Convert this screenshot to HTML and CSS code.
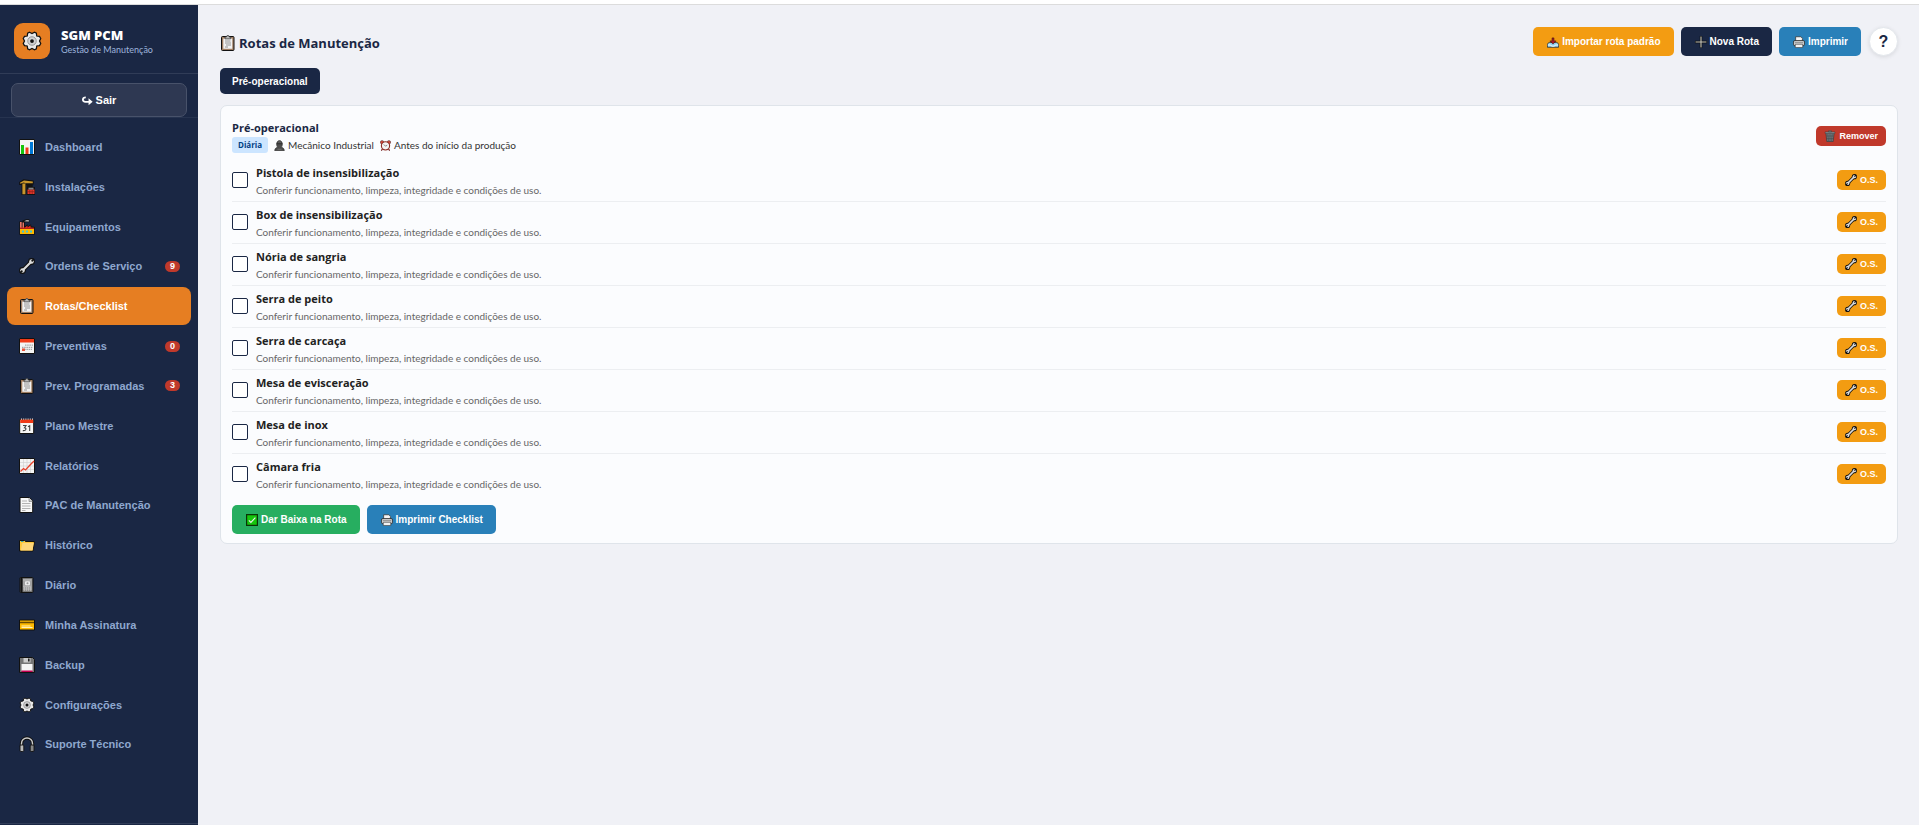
FILE: index.html
```
<!DOCTYPE html>
<html lang="pt-BR">
<head>
<meta charset="utf-8">
<meta name="viewport" content="width=device-width, initial-scale=1">
<title>SGM PCM - Rotas de Manutenção</title>
<link rel="stylesheet" href="styles.css">
</head>
<body>

<!-- icones -->
<svg class="sprite" aria-hidden="true">
<symbol id="i-gear" viewBox="0 0 16 16">
<path d="M6 1l2 1 2-1 1.500.8.3 2.200 2.200.3L15 6l-1 2 1 2-1 1.700-2.200.3-.3 2.200L10 15l-2-1-2 1-1.500-.8-.3-2.200L2 11.700 1 10l1-2-1-2 1-1.700L4.200 4l.3-2.200z" fill="#e8e8e8" stroke="#111" stroke-width="1"/>
<circle cx="8" cy="8" r="3.400" fill="#d2d2d2" stroke="#8a8a8a" stroke-width=".7"/>
<circle cx="8" cy="8" r="1.500" fill="#111"/>
</symbol>
<symbol id="i-chart" viewBox="0 0 16 16">
<path d="M.5.5h15v15H.5z" fill="#f4f4f4" stroke="#111"/>
<path d="M2 6h3v9H2z" fill="#16c60c"/><path d="M6.500 8.500h3V15h-3z" fill="#f03a17"/><path d="M11 3h3v12h-3z" fill="#0078d7"/>
</symbol>
<symbol id="i-crane" viewBox="0 0 16 16">
<path d="M2.500 16V6H.2V3L4.500.3 14.700 1.500v4h-1V8H16v8H7.500V6H7v10z" fill="#111"/>
<path d="M3.400 15.300V4.500h3v10.800zM1.200 4.800V3.500L5 1.400l8.800 1.200v1.600H6l-1-.8z" fill="#c8962c"/>
<path d="M8.500 10.500h7V15h-7z" fill="#e8382c"/><path d="M8.500 12.700h7M10.800 11v4M13.200 11v4" stroke="#862018" stroke-width=".7"/>
<path d="M9.500 8.700h5v1.800h-5z" fill="#888"/>
</symbol>
<symbol id="i-factory" viewBox="0 0 16 16">
<path d="M.3 15.800V2.500h3V1.500l4-1.200h3v3H6v4l3-2v2l3-2 .3 2L15.700 8v7.800z" fill="#111"/>
<path d="M1 9V3h1.700v6zM3.500 9V3.500H5V9z" fill="#e77465"/>
<path d="M5 2.300l2.500-1.100h2.300v1.200z" fill="#ddd"/>
<path d="M1 9.800V8.500h5l2.500-2v2l3-2v2l3.500.3v1z" fill="#e8281c"/>
<path d="M1 10h14v5H1z" fill="#ffb900"/>
<path d="M3 11.500h2v2H3zM7 11.500h2v2H7zM11 11.500h2v2h-2z" fill="#42c4d8"/>
</symbol>
<symbol id="i-wrench" viewBox="0 0 16 16">
<path d="M3.500 12.500l9-9" stroke="#111" stroke-width="4.200"/>
<circle cx="3.500" cy="12.500" r="3.400" fill="#111"/><circle cx="12.500" cy="3.500" r="3.400" fill="#111"/>
<path d="M3.500 12.500l9-9" stroke="#dcdcdc" stroke-width="2.200"/>
<circle cx="3.500" cy="12.500" r="2.300" fill="#dcdcdc"/><circle cx="12.500" cy="3.500" r="2.300" fill="#dcdcdc"/>
<path d="M3.400 12.600L1 15M12.600 3.400L15 1" stroke="#111" stroke-width="1.600"/>
</symbol>
<symbol id="i-clip" viewBox="0 0 16 16">
<rect x="1.500" y="1.500" width="12.500" height="14" rx="1" fill="#a07d60" stroke="#111"/>
<path d="M3.300 3.500h9v10.300h-9z" fill="#f2f2f2"/>
<path d="M5 3.200V2h1.500L7 .6h1.700L9.200 2h1.500v1.900H5z" fill="#bbb" stroke="#333" stroke-width=".7"/>
<path d="M5 6h5.500M5 8h6M6 10h5M5 12h3" stroke="#8a8a8a" stroke-width=".9"/>
</symbol>
<symbol id="i-cal" viewBox="0 0 16 16">
<path d="M.5.5h15v15H.5z" fill="#f4f4f4" stroke="#111"/>
<path d="M1 1h14v3.500H1z" fill="#f03a17"/>
<path d="M6 7.200h8M3 9.300h11M3 11.400h10" stroke="#a6a6a6" stroke-width="1.300" stroke-dasharray="1.500 .7"/>
<path d="M3 10.500h3V13H3z" fill="#e8553c"/>
</symbol>
<symbol id="i-cal31" viewBox="0 0 16 16">
<path d="M.7 1.500h14v14H.7z" fill="#f6f6f6" stroke="#111"/>
<path d="M1.200 1.500h13V5h-13z" fill="#f03a17"/>
<path d="M2 1.200h12" stroke="#ddd" stroke-width="1.200" stroke-dasharray="1 1.200"/>
<path d="M4 7.500h3L5.500 9.700c2.400.2 1.800 3.400-1.700 2.900M9 8.700l1.700-1V13" fill="none" stroke="#444" stroke-width="1.100"/>
</symbol>
<symbol id="i-line" viewBox="0 0 16 16">
<path d="M.5.5h15v15H.5z" fill="#f4f4f4" stroke="#111"/>
<path d="M4.500 1v14M8 1v14M11.500 1v14M1 4.500h14M1 8h14M1 11.500h14" stroke="#ccc" stroke-width=".6"/>
<path d="M1.500 13.500l3-3 2 1.500 5-5.500 3.500-3.500" fill="none" stroke="#e8402a" stroke-width="1.300"/>
</symbol>
<symbol id="i-page" viewBox="0 0 16 16">
<path d="M1 .5h9.500L13.700 4v11.500H1z" fill="#f7f7f7" stroke="#111"/>
<path d="M10 1v3.500h3.500" fill="#ccc" stroke="#777" stroke-width=".6"/>
<path d="M3 4h5M3 6.500h8.500M3 9h8.500M3 11.500h8.500M3 13.500h3.500" stroke="#aaa" stroke-width=".9"/>
</symbol>
<symbol id="i-folder" viewBox="0 0 16 16">
<path d="M.5 14V3.500h5L6.500 4.500h9L14 14z" fill="#ffc83d" stroke="#111"/>
<path d="M1.800 13.500l1.700-7.500h11.300l-1.300 7.500z" fill="#ffd679"/>
<path d="M2 4.500h2.500" stroke="#37a8b0" stroke-width="1"/>
</symbol>
<symbol id="i-book" viewBox="0 0 16 16">
<rect x="1" y=".5" width="13" height="15" rx=".8" fill="#777" stroke="#111"/>
<path d="M1.500 1h2v14h-2z" fill="#111"/>
<path d="M4 2h9v11.500H4z" fill="#a2a2a2"/>
<path d="M4.500 3h8M5 11h8M4.500 9.300h8M5 13h7" stroke="#ddd" stroke-width=".8" stroke-dasharray="1 1"/>
<rect x="6" y="4.300" width="5" height="4" rx="1" fill="#ececec"/><circle cx="8.500" cy="6.200" r="1" fill="#999"/>
</symbol>
<symbol id="i-card" viewBox="0 0 16 16">
<path d="M.5 3h15v10H.5z" fill="#ffb900" stroke="#111"/>
<path d="M1 5.500h14" stroke="#6b4a00" stroke-width="1.500"/>
<path d="M2.500 9h9M2.500 10.500h11" stroke="#fff0bc" stroke-width="1"/>
</symbol>
<symbol id="i-disk" viewBox="0 0 16 16">
<path d="M.5.5h13l2 2v13H.5z" fill="#767676" stroke="#111"/>
<path d="M4.500 1h7v4.500h-7z" fill="#ccc"/><path d="M9 1.500h1.600v3H9z" fill="#222"/>
<path d="M2.500 7h11v7h-11z" fill="#f5f5f5"/><path d="M2.500 13.500h11V15h-11z" fill="#c30052"/>
</symbol>
<symbol id="i-phones" viewBox="0 0 16 16">
<path d="M2.500 11V7.500a5.500 5.500 0 0 1 11 0V11" fill="none" stroke="#111" stroke-width="3.400"/>
<path d="M2.500 11V7.500a5.500 5.500 0 0 1 11 0V11" fill="none" stroke="#ccc" stroke-width="1.400"/>
<rect x="1" y="9" width="3.800" height="6.500" rx="1" fill="#bbb" stroke="#111" stroke-width=".9"/>
<rect x="11.200" y="9" width="3.800" height="6.500" rx="1" fill="#888" stroke="#111" stroke-width=".9"/>
</symbol>
<symbol id="i-exit" viewBox="0 0 16 16">
<path d="M5.500 3.500C0 3.500 0 10 5 10h6" fill="none" stroke="#fff" stroke-width="2.600"/>
<path d="M9.500 4.800l6 5-6 5z" fill="#fff"/>
</symbol>
<symbol id="i-inbox" viewBox="0 0 16 16">
<path d="M.5 15v-4.500L3 8.500h10l2.500 2V15z" fill="#8fd0f0" stroke="#222"/>
<path d="M1 12h4l1 1.500h4l1-1.500h4" fill="none" stroke="#fff" stroke-width="1.200"/>
<path d="M6.700 2.500h2.600v4H12L8 10.800 4 6.500h2.700z" fill="#a51d2a" stroke="#3a1010" stroke-width=".7"/>
</symbol>
<symbol id="i-plus" viewBox="0 0 16 16">
<path d="M8 0v16M0 8h16" stroke="#080808" stroke-width="3.200"/><path d="M8 .7v14.600M.7 8h14.600" stroke="#c8c8c0" stroke-width="1.500"/>
</symbol>
<symbol id="i-print" viewBox="0 0 16 16">
<path d="M3.500 6.500V1h7l2 2v3.500" fill="#f6f6f6" stroke="#333"/>
<rect x=".6" y="6" width="14.800" height="7" rx="2" fill="#ccc" stroke="#222"/>
<path d="M2.500 8.500h11" stroke="#777" stroke-width=".9"/>
<path d="M3 11h10v4.400H3z" fill="#f2f2f2" stroke="#333" stroke-width=".8"/>
</symbol>
<symbol id="i-trash" viewBox="0 0 16 16">
<path d="M2.500 4h11l-1.300 11.500H3.800z" fill="#71797d" stroke="#333" stroke-width=".8"/>
<path d="M5 5l1 10M8 5v10M11 5l-1 10M3.500 8h9M3.800 11.500h8.400" stroke="#434a4d" stroke-width=".8"/>
<path d="M1.500 2.500h13v2h-13zM6 1h4v1.500H6z" fill="#8d9598" stroke="#333" stroke-width=".6"/>
</symbol>
<symbol id="i-check" viewBox="0 0 16 16">
<path d="M.8.8h14.400v14.400H.8z" fill="#16c60c" stroke="#0a3307" stroke-width="1.600"/>
<path d="M3.800 8.500l2.700 2.700 6-6.500" fill="none" stroke="#eee" stroke-width="1.500"/>
</symbol>
<symbol id="i-worker" viewBox="0 0 16 16">
<path d="M1 15.500c0-3 2-4.500 4.500-4.800C3 8.500 3 1 8 .8 13 1 13 8.500 10.500 10.700 13 11 15 12.500 15 15.500z" fill="#4d4d4d" stroke="#222" stroke-width=".8"/>
<path d="M3.500 5.500h9" stroke="#222"/><path d="M6 3.500c1-1 3-1 4 0" fill="none" stroke="#777"/><path d="M5 13.500h6" stroke="#888" stroke-width=".8"/>
</symbol>
<symbol id="i-clock" viewBox="0 0 16 16">
<path d="M3.500 13l-1.500 2.500M12.500 13l1.500 2.500" stroke="#6b1212" stroke-width="1.600"/>
<circle cx="3" cy="3.300" r="2.500" fill="#d9493c" stroke="#333" stroke-width=".7"/><circle cx="13" cy="3.300" r="2.500" fill="#d9493c" stroke="#333" stroke-width=".7"/>
<circle cx="8" cy="8.500" r="6" fill="#f4f4f4" stroke="#8c2c22" stroke-width="1.600"/>
<path d="M5.500 6.500L8 9l2.500-1.500" fill="none" stroke="#555"/>
</symbol>
</svg>

<div class="topbar"></div>
<div class="app">

<aside class="sidebar">
	<div class="brand">
		<div class="logo"><svg class="ico-lg"><use href="#i-gear"/></svg></div>
		<div>
			<div class="brand-name">SGM PCM</div>
			<div class="brand-sub">Gestão de Manutenção</div>
		</div>
	</div>
	<div class="logout">
		<button type="button" class="btn-sair"><svg class="ico-xs"><use href="#i-exit"/></svg> Sair</button>
	</div>
	<nav class="menu">
		<a href="#"><svg class="ico"><use href="#i-chart"/></svg>Dashboard</a>
		<a href="#"><svg class="ico"><use href="#i-crane"/></svg>Instalações</a>
		<a href="#"><svg class="ico"><use href="#i-factory"/></svg>Equipamentos</a>
		<a href="#"><svg class="ico"><use href="#i-wrench"/></svg>Ordens de Serviço<span class="count">9</span></a>
		<a href="#" class="active"><svg class="ico"><use href="#i-clip"/></svg>Rotas/Checklist</a>
		<a href="#"><svg class="ico"><use href="#i-cal"/></svg>Preventivas<span class="count">0</span></a>
		<a href="#"><svg class="ico"><use href="#i-clip"/></svg>Prev. Programadas<span class="count">3</span></a>
		<a href="#"><svg class="ico"><use href="#i-cal31"/></svg>Plano Mestre</a>
		<a href="#"><svg class="ico"><use href="#i-line"/></svg>Relatórios</a>
		<a href="#"><svg class="ico"><use href="#i-page"/></svg>PAC de Manutenção</a>
		<a href="#"><svg class="ico"><use href="#i-folder"/></svg>Histórico</a>
		<a href="#"><svg class="ico"><use href="#i-book"/></svg>Diário</a>
		<a href="#"><svg class="ico"><use href="#i-card"/></svg>Minha Assinatura</a>
		<a href="#"><svg class="ico"><use href="#i-disk"/></svg>Backup</a>
		<a href="#"><svg class="ico"><use href="#i-gear"/></svg>Configurações</a>
		<a href="#"><svg class="ico"><use href="#i-phones"/></svg>Suporte Técnico</a>
	</nav>
	<div class="side-foot"></div>
</aside>

<main class="content">
	<header class="page-head">
		<h1><svg class="ico"><use href="#i-clip"/></svg>Rotas de Manutenção</h1>
		<div class="actions">
			<button type="button" class="btn amarelo"><svg class="ico-sm"><use href="#i-inbox"/></svg>Importar rota padrão</button>
			<button type="button" class="btn escuro"><svg class="ico-sm"><use href="#i-plus"/></svg>Nova Rota</button>
			<button type="button" class="btn azul"><svg class="ico-sm"><use href="#i-print"/></svg>Imprimir</button>
			<button type="button" class="help" title="Ajuda">?</button>
		</div>
	</header>

	<div class="tabs">
		<button type="button" class="tab">Pré-operacional</button>
	</div>

	<section class="card">
		<div class="card-head">
			<div>
				<h2>Pré-operacional</h2>
				<div class="meta">
					<span class="freq">Diária</span>
					<span class="info"><svg class="ico-xs"><use href="#i-worker"/></svg>Mecânico Industrial</span>
					<span class="info"><svg class="ico-xs"><use href="#i-clock"/></svg>Antes do início da produção</span>
				</div>
			</div>
			<button type="button" class="btn-sm vermelho"><svg class="ico-sm"><use href="#i-trash"/></svg>Remover</button>
		</div>

		<ul class="itens">
			<li>
				<input type="checkbox" id="item1">
				<label for="item1"><b>Pistola de insensibilização</b><small>Conferir funcionamento, limpeza, integridade e condições de uso.</small></label>
				<button type="button" class="btn-sm amarelo"><svg class="ico-sm"><use href="#i-wrench"/></svg>O.S.</button>
			</li>
			<li>
				<input type="checkbox" id="item2">
				<label for="item2"><b>Box de insensibilização</b><small>Conferir funcionamento, limpeza, integridade e condições de uso.</small></label>
				<button type="button" class="btn-sm amarelo"><svg class="ico-sm"><use href="#i-wrench"/></svg>O.S.</button>
			</li>
			<li>
				<input type="checkbox" id="item3">
				<label for="item3"><b>Nória de sangria</b><small>Conferir funcionamento, limpeza, integridade e condições de uso.</small></label>
				<button type="button" class="btn-sm amarelo"><svg class="ico-sm"><use href="#i-wrench"/></svg>O.S.</button>
			</li>
			<li>
				<input type="checkbox" id="item4">
				<label for="item4"><b>Serra de peito</b><small>Conferir funcionamento, limpeza, integridade e condições de uso.</small></label>
				<button type="button" class="btn-sm amarelo"><svg class="ico-sm"><use href="#i-wrench"/></svg>O.S.</button>
			</li>
			<li>
				<input type="checkbox" id="item5">
				<label for="item5"><b>Serra de carcaça</b><small>Conferir funcionamento, limpeza, integridade e condições de uso.</small></label>
				<button type="button" class="btn-sm amarelo"><svg class="ico-sm"><use href="#i-wrench"/></svg>O.S.</button>
			</li>
			<li>
				<input type="checkbox" id="item6">
				<label for="item6"><b>Mesa de evisceração</b><small>Conferir funcionamento, limpeza, integridade e condições de uso.</small></label>
				<button type="button" class="btn-sm amarelo"><svg class="ico-sm"><use href="#i-wrench"/></svg>O.S.</button>
			</li>
			<li>
				<input type="checkbox" id="item7">
				<label for="item7"><b>Mesa de inox</b><small>Conferir funcionamento, limpeza, integridade e condições de uso.</small></label>
				<button type="button" class="btn-sm amarelo"><svg class="ico-sm"><use href="#i-wrench"/></svg>O.S.</button>
			</li>
			<li>
				<input type="checkbox" id="item8">
				<label for="item8"><b>Câmara fria</b><small>Conferir funcionamento, limpeza, integridade e condições de uso.</small></label>
				<button type="button" class="btn-sm amarelo"><svg class="ico-sm"><use href="#i-wrench"/></svg>O.S.</button>
			</li>
		</ul>

		<div class="card-foot">
			<button type="button" class="btn verde"><svg class="ico-sm"><use href="#i-check"/></svg>Dar Baixa na Rota</button>
			<button type="button" class="btn azul"><svg class="ico-sm"><use href="#i-print"/></svg>Imprimir Checklist</button>
		</div>
	</section>
</main>

</div>
</body>
</html>
```
FILE: styles.css
```
*{
	box-sizing:border-box;
	margin:0;
	padding:0;
}
body{
	font-family:"Segoe UI","Open Sans","Noto Sans",sans-serif;
	font-size:10px;
	color:#222;
	background:#f0f1f6;
}
button{
	font-family:Arial,"Liberation Sans",sans-serif;
	font-weight:bold;
	border:0;
	cursor:pointer;
}
.sprite{
	position:absolute;
	width:0;
	height:0;
}
.ico{ width:16px; height:16px; flex:none; }
.ico-lg{ width:20px; height:20px; }
.ico-sm{ width:12px; height:12px; flex:none; }
.ico-xs{ width:11px; height:11px; flex:none; }

.topbar{
	height:5px;
	background:#fff;
	border-bottom:1px solid #dcdcdc;
}
.app{
	display:flex;
	min-height:calc(100vh - 5px);
}

/* menu lateral */
.sidebar{
	width:198px;
	flex:none;
	display:flex;
	flex-direction:column;
	background:#1a2744;
}
.brand{
	display:flex;
	align-items:center;
	gap:11px;
	padding:18px 14px 14px;
	border-bottom:1px solid #303c57;
}
.logo{
	width:36px;
	height:36px;
	border-radius:9px;
	background:#e67e22;
	display:flex;
	align-items:center;
	justify-content:center;
}
.brand-name{
	font-size:13px;
	line-height:16px;
	font-weight:800;
	color:#fff;
}
.brand-sub{
	font-family:"Segoe UI",Lato,sans-serif;
	font-size:9px;
	line-height:13px;
	color:#9db4dc;
}
.logout{
	padding:9px 11px 0;
	border-bottom:1px solid #26334f;
}
.btn-sair{
	display:flex;
	align-items:center;
	justify-content:center;
	gap:3px;
	width:100%;
	height:34px;
	font-size:11px;
	color:#fff;
	background:#2e3852;
	border:1px solid #48526a;
	border-radius:7px;
}
.menu{
	flex:1;
	padding:10px 7px;
}
.menu a{
	display:flex;
	align-items:center;
	gap:10px;
	height:38px;
	margin-bottom:1%;
	padding:0 11px 0 12px;
	border-radius:8px;
	font-family:Arial,"Liberation Sans",sans-serif;
	font-size:11px;
	font-weight:bold;
	color:#8fa8cf;
	text-decoration:none;
}
.menu a.active{
	background:#e67e22;
	color:#fff;
}
.count{
	margin-left:auto;
	width:15px;
	height:11px;
	border-radius:6px;
	background:#c0392b;
	color:#fff;
	font-size:9px;
	line-height:11px;
	text-align:center;
}
.side-foot{
	height:2px;
	border-top:1px solid #303c57;
}

/* conteudo */
.content{
	flex:1;
	min-width:0;
	padding:22px 21px 22px 22px;
}
.page-head{
	display:flex;
	align-items:center;
	justify-content:space-between;
	margin-bottom:12px;
}
h1{
	display:flex;
	align-items:center;
	gap:3px;
	padding-top:2px;
	font-size:13px;
	line-height:20px;
	color:#1a2744;
}
.actions{
	display:flex;
	gap:7px;
}
.btn{
	display:flex;
	align-items:center;
	gap:3px;
	height:29px;
	padding:0 13px 0 14px;
	border-radius:5px;
	font-size:10px;
	color:#fff;
}
.btn-sm{
	display:flex;
	align-items:center;
	gap:3px;
	height:20px;
	padding:0 8px;
	border-radius:5px;
	font-size:9px;
	color:#fff;
}
.amarelo{ background:#f39c12; }
.escuro{ background:#1a2744; }
.azul{ background:#2980b9; }
.verde{ background:#27ae60; }
.vermelho{ background:#c0392b; }
.help{
	width:29px;
	height:29px;
	margin-left:1px;
	border-radius:50%;
	border:1px solid #e3e7ec;
	background:#fff;
	color:#1a2744;
	font-size:16px;
	font-weight:900;
	box-shadow:0 1px 4px rgba(0,0,0,.1);
}
.tabs{
	display:flex;
	margin-bottom:11px;
}
.tab{
	height:26px;
	padding:0 12px;
	border-radius:5px;
	font-size:10px;
	color:#fff;
	background:#1a2744;
}

.card{
	padding:12px 11px 9px;
	background:#fbfcfe;
	border:1px solid #dfe4ea;
	border-radius:7px;
}
.card-head{
	display:flex;
	align-items:center;
	justify-content:space-between;
	margin-bottom:7px;
}
h2{
	font-size:11px;
	line-height:19px;
	color:#1a2744;
}
.meta{
	display:flex;
	align-items:center;
	gap:6px;
	line-height:16px;
}
.freq{
	padding:0 6px;
	border-radius:3px;
	background:#cce5ff;
	color:#004085;
	font-size:8px;
	font-weight:bold;
}
.info{
	display:flex;
	align-items:center;
	gap:3px;
	font-family:"Segoe UI",Lato,sans-serif;
	color:#333;
}
.itens{
	list-style:none;
}
.itens li{
	display:flex;
	align-items:center;
	gap:8px;
	height:42px;
	padding-bottom:2px;
	border-bottom:1px solid #eceef1;
}
.itens li:last-child{
	border-bottom-color:transparent;
}
.itens input{
	appearance:none;
	width:16px;
	height:16px;
	background:#fff;
	border:1px solid #1a2744;
	border-radius:2px;
}
.itens input:checked{
	background:#1a2744;
}
.itens label{
	flex:1;
}
.itens b{
	display:block;
	font-size:11px;
	line-height:20px;
}
.itens small{
	display:block;
	font-family:"Segoe UI",Lato,sans-serif;
	font-size:10px;
	line-height:14px;
	color:#666;
}
.card-foot{
	display:flex;
	gap:7px;
	margin-top:9px;
}
```
